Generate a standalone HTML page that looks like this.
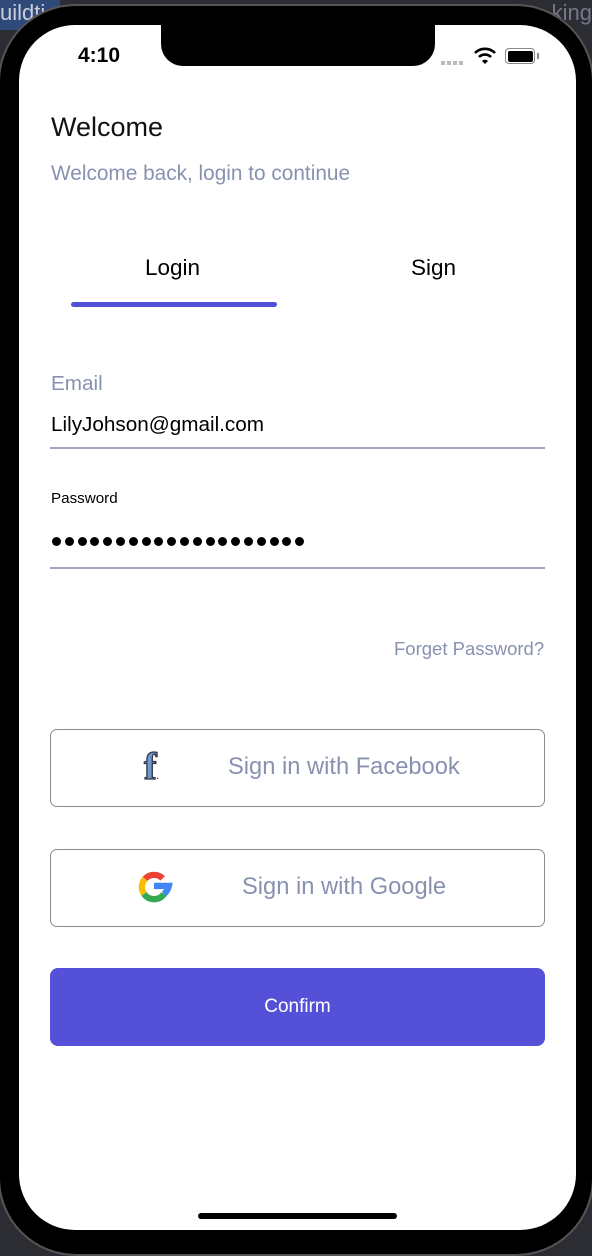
<!DOCTYPE html>
<html><head><meta charset="utf-8"><style>
*{margin:0;padding:0;box-sizing:border-box}
body{width:592px;height:1256px;background:#2b2d33;position:relative;overflow:hidden;font-family:"Liberation Sans",Arial,sans-serif}
.frame{position:absolute;left:-2px;top:4px;width:596px;height:1252px;background:#000;border-radius:78px;border:2px solid #555}
.screen{position:absolute;left:19px;top:25px;width:557px;height:1205px;background:#fff;border-radius:56px;overflow:hidden}
.notch{position:absolute;left:142px;top:0;width:274px;height:41px;background:#000;border-radius:0 0 22px 22px}
.abs{position:absolute;white-space:nowrap}
.dot{position:absolute;width:9px;height:9px;border-radius:50%;background:#000;top:537px}
.btn{position:absolute;left:50px;width:495px;height:78px;border:1.5px solid #8a8a8a;border-radius:7px}
</style></head><body>
<div class="abs" style="left:0;top:0;width:60px;height:30px;background:#2f4a78"></div>
<div class="abs" style="left:0;top:0;color:#ccd;font-size:22px">uildti</div>
<div class="abs" style="right:0;top:0;color:#778;font-size:22px">king</div>
<div class="frame"></div>
<div class="screen">
<div class="notch"></div>
<div class="abs" style="left:59px;top:19px;font-size:21px;font-weight:bold;color:#000">4:10</div>
<div class="abs" style="left:422px;top:36px;width:24px;height:4px;background:repeating-linear-gradient(90deg,#bbb 0 4px,transparent 4px 6px)"></div>
<svg class="abs" style="left:455px;top:22px" width="22" height="17" viewBox="0 0 22 17"><path d="M1 6 A14 14 0 0 1 21 6" stroke="#000" stroke-width="2.6" fill="none"/><path d="M5 10 A8.5 8.5 0 0 1 17 10" stroke="#000" stroke-width="2.6" fill="none"/><path d="M8 14 L11 17 L14 14 A4 4 0 0 0 8 14Z" fill="#000"/></svg>
<div class="abs" style="left:486px;top:23px;width:30px;height:16px;border:1.5px solid #888;border-radius:4px;padding:1.5px"><div style="width:100%;height:100%;background:#000;border-radius:2px"></div></div>
<div class="abs" style="left:518px;top:28px;width:2px;height:6px;background:#888"></div>
</div>
<div class="abs" style="left:51px;top:112px;font-size:27px;color:#111">Welcome</div>
<div class="abs" style="left:51px;top:162px;font-size:20.8px;color:#8892b0">Welcome back, login to continue</div>
<div class="abs" style="left:145px;top:255px;font-size:22.5px;color:#000;font-weight:500">Login</div>
<div class="abs" style="left:411px;top:255px;font-size:22.5px;color:#000;font-weight:500">Sign</div>
<div class="abs" style="left:71px;top:302px;width:206px;height:5px;background:#5050d8;border-radius:3px"></div>
<div class="abs" style="left:51px;top:372px;font-size:20.7px;color:#8892b0">Email</div>
<div class="abs" style="left:51px;top:413px;font-size:20.7px;color:#000">LilyJohson@gmail.com</div>
<div class="abs" style="left:50px;top:447px;width:495px;height:1.5px;background:#a0a8c0"></div>
<div class="abs" style="left:51px;top:490px;font-size:15.2px;color:#000">Password</div>
<div id="dots"></div>
<div class="abs" style="left:50px;top:567px;width:495px;height:1.5px;background:#a0a8c0"></div>
<div class="abs" style="left:394px;top:638px;font-size:18.5px;color:#8892b0">Forget Password?</div>
<div class="btn" style="top:729px"></div>
<div class="abs" style="left:144px;top:747px;font-family:'Liberation Serif',serif;font-weight:bold;font-size:38px;color:#6a9ad0;-webkit-text-stroke:1.3px #334;line-height:40px">f<span style="font-size:8px;-webkit-text-stroke:0;color:#333">.</span></div>
<div class="abs" style="left:228px;top:754px;font-size:23.7px;color:#8892b0">Sign in with Facebook</div>
<div class="btn" style="top:849px"></div>
<svg class="abs" style="left:135px;top:868px" width="38" height="38" viewBox="0 0 36 36">
<path d="M18 6.5 A11.5 11.5 0 0 1 26.2 9.9" stroke="#ea4335" stroke-width="6" fill="none"/>
<path d="M9.5 10.3 A11.5 11.5 0 0 1 18 6.5" stroke="#ea4335" stroke-width="6" fill="none"/>
<path d="M8.6 24.6 A11.5 11.5 0 0 1 9.5 10.3" stroke="#fbbc05" stroke-width="6" fill="none"/>
<path d="M27.5 24.6 A11.5 11.5 0 0 1 8.6 24.6" stroke="#34a853" stroke-width="6" fill="none"/>
<path d="M18 17 H32 A14 14 0 0 1 27.5 24.6" stroke="#4285f4" stroke-width="6" fill="none"/>
</svg>
<div class="abs" style="left:242px;top:874px;font-size:23.7px;color:#8892b0">Sign in with Google</div>
<div class="abs" style="left:50px;top:968px;width:495px;height:78px;background:#5550d8;border-radius:8px;color:#fff;font-size:19px;text-align:center;line-height:78px">Confirm</div>
<div class="abs" style="left:198px;top:1213px;width:199px;height:6px;background:#000;border-radius:3px"></div>
<script>
var d=document.getElementById('dots'),h='';
for(var i=0;i<20;i++)h+='<div class="dot" style="left:'+(52+i*12.8)+'px"></div>';
d.innerHTML=h;
</script>
</body></html>
